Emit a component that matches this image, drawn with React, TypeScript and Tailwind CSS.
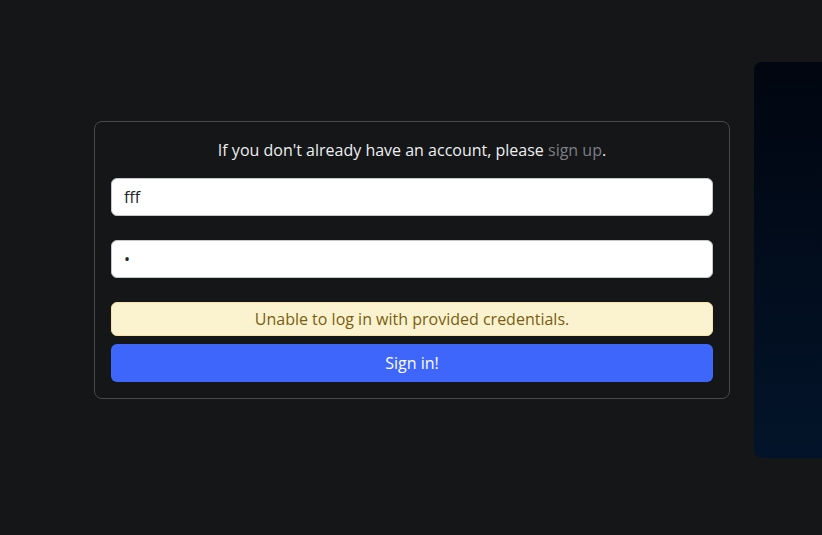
import { useState } from 'react'

export default function App() {
  const [username, setUsername] = useState('fff')
  const [password, setPassword] = useState('f')

  return (
    <div
      className="h-[535px] w-[822px] overflow-hidden bg-[#151618] text-[#eceef0]"
      style={{ fontFamily: '"Open Sans", "Noto Sans", sans-serif' }}
    >
      <div className="flex items-center gap-6 pl-[94px] pt-[62px]">
        {/* Login card */}
        <form
          onSubmit={(e) => e.preventDefault()}
          className="w-[636px] shrink-0 rounded-lg border border-[#48494b] bg-[#151618] px-4 pt-[16px] pb-4"
        >
          <p className="text-center text-base leading-6">
            If you don't already have an account, please{' '}
            <a href="#" className="text-[#7c7f83]">sign up</a>.
          </p>
          <input
            value={username}
            onChange={(e) => setUsername(e.target.value)}
            className="mt-4 block h-[38px] w-full rounded-md border border-[#c3c6ca] bg-white px-3 text-base text-[#212529] outline-none"
          />
          <input
            type="password"
            value={password}
            onChange={(e) => setPassword(e.target.value)}
            className="mt-6 block h-[38px] w-full rounded-md border border-[#c3c6ca] bg-white px-3 text-base text-[#212529] outline-none"
          />
          <div className="mt-6 flex h-[34px] items-center justify-center rounded-md border border-[#f5e4a6] bg-[#fbf3d0] text-base text-[#7a5d12]">
            Unable to log in with provided credentials.
          </div>
          <button
            type="submit"
            className="mt-2 block h-[38px] w-full rounded-md bg-[#3f66fa] text-base text-white"
          >
            Sign in!
          </button>
        </form>

        {/* Side panel */}
        <div className="h-[396px] w-[100px] shrink-0 rounded-lg bg-gradient-to-b from-[#010610] to-[#03142a]" />
      </div>
    </div>
  )
}
